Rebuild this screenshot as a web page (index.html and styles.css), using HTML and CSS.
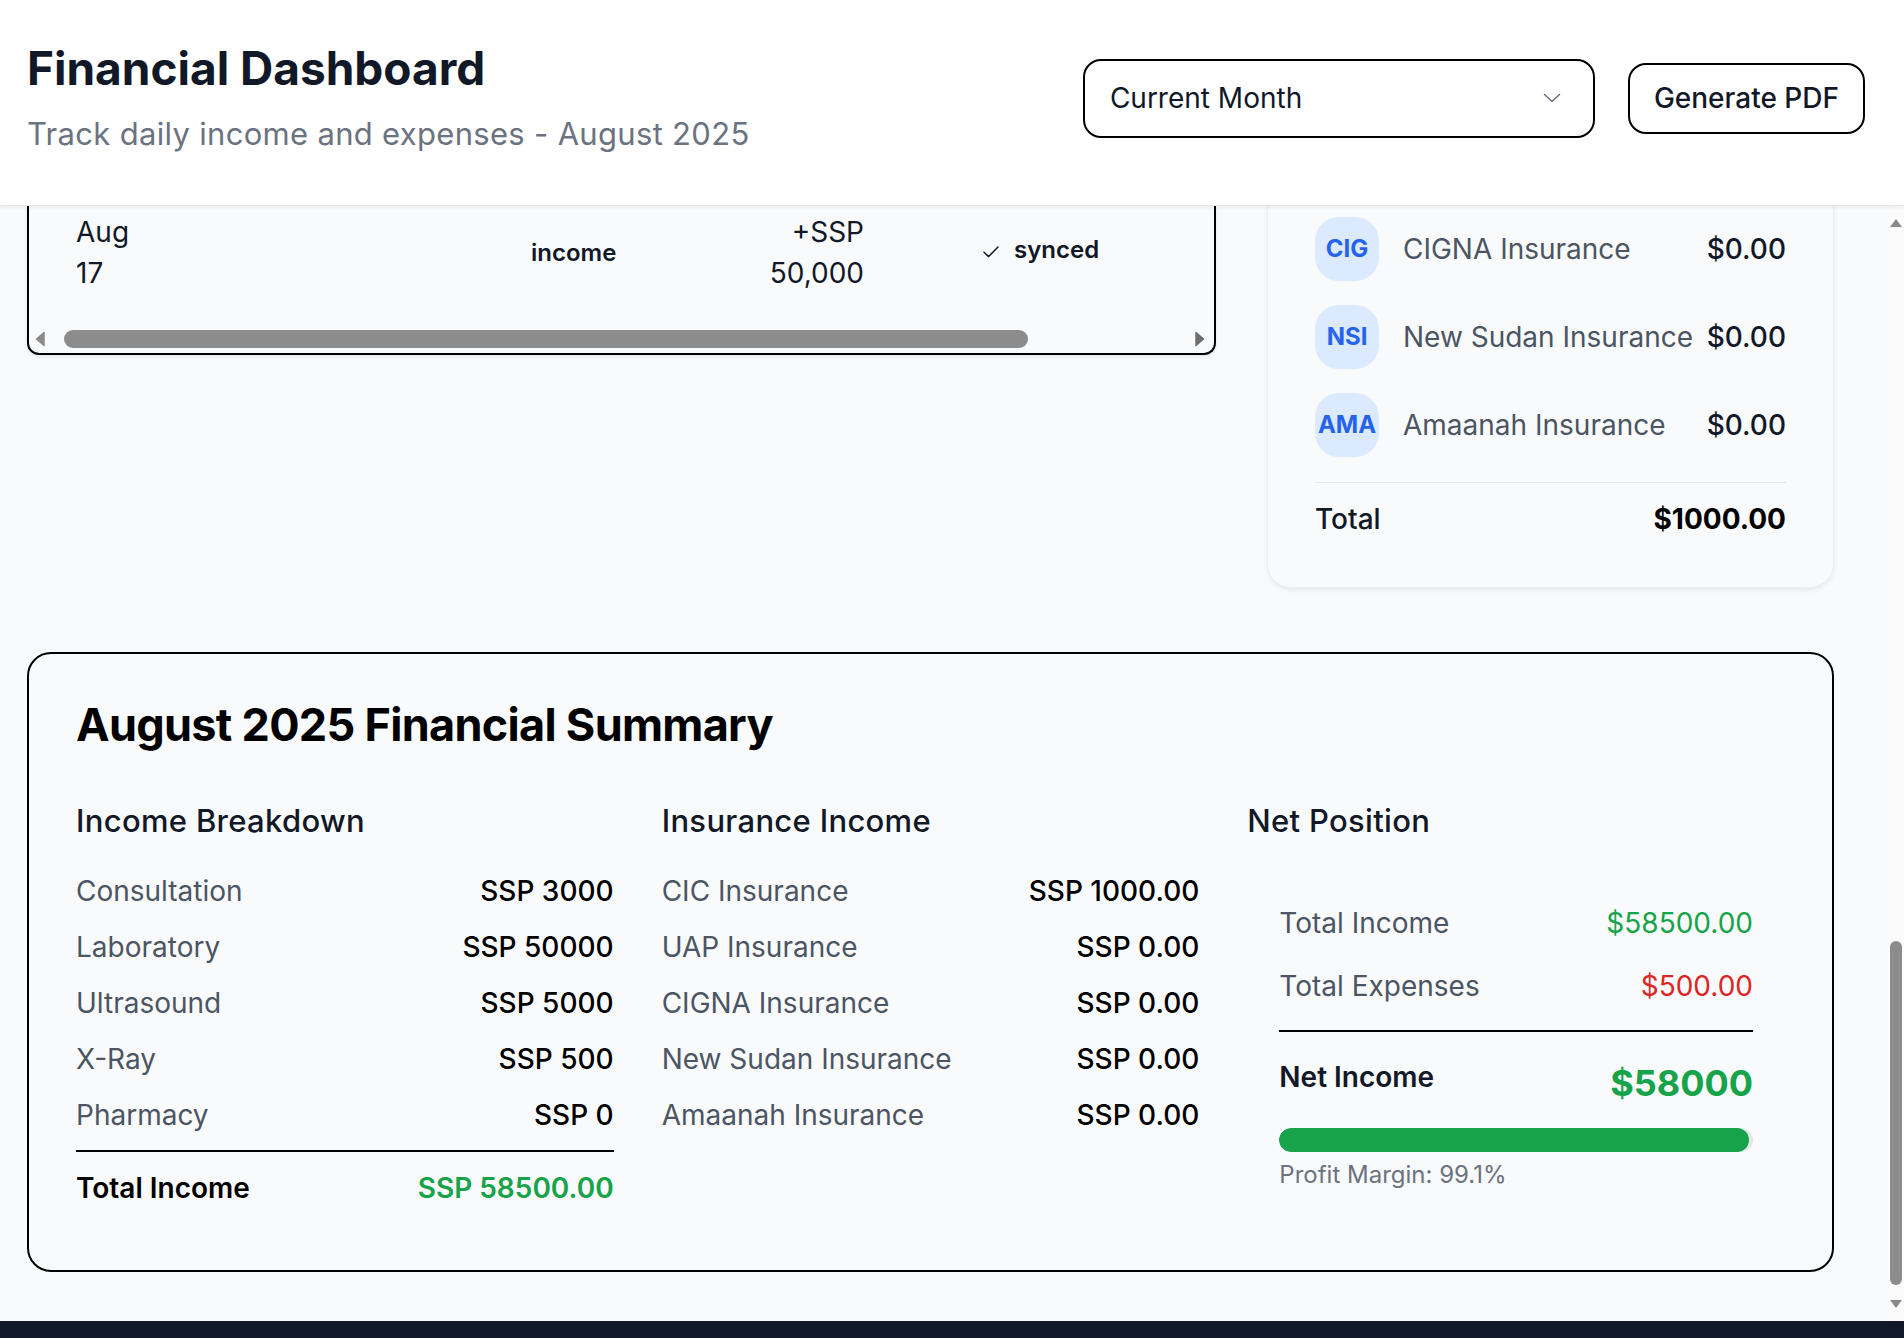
FILE: index.html
```html
<!DOCTYPE html>
<html lang="en">
<head>
<meta charset="utf-8">
<title>Financial Dashboard</title>
<link rel="stylesheet" href="styles.css">
</head>
<body>
<div class="app">
  <header class="topbar">
    <div class="titles">
      <h1 class="page-title">Financial Dashboard</h1>
      <p class="page-sub">Track daily income and expenses - August 2025</p>
    </div>
    <div class="actions">
      <div class="select">
        <span>Current Month</span>
        <svg class="chev" viewBox="0 0 18 10" width="18" height="10"><path d="M1.5 1.5l7.5 7 7.5-7" fill="none" stroke="#6b7280" stroke-width="1.6" stroke-linecap="round" stroke-linejoin="round"/></svg>
      </div>
      <button class="btn">Generate PDF</button>
    </div>
  </header>

  <div class="viewport">
    <main class="content">
      <div class="top-grid">
        <section class="tx-card">
          <div class="tx-row">
            <div class="c-date"><span class="date-text">Aug 17</span></div>
            <div class="c-type">income</div>
            <div class="c-amount">+SSP 50,000</div>
            <div class="c-status">
              <svg class="check" viewBox="0 0 16 12" width="16" height="12"><path d="M1 6.2l4.6 4.4L15 1" fill="none" stroke="#111827" stroke-width="1.5" stroke-linecap="round" stroke-linejoin="round"/></svg>
              <span>synced</span>
            </div>
          </div>
          <div class="hscroll">
            <svg class="harrow" viewBox="0 0 10 16" width="10" height="16"><path d="M9 1.5L1.5 8 9 14.5z" fill="#8a8a8a" stroke="#8a8a8a" stroke-width="1.5" stroke-linejoin="round"/></svg>
            <div class="hthumb"></div>
            <svg class="harrow harrow-r" viewBox="0 0 10 16" width="10" height="16"><path d="M1 1.5L8.5 8 1 14.5z" fill="#6e6e6e" stroke="#6e6e6e" stroke-width="1.5" stroke-linejoin="round"/></svg>
          </div>
        </section>

        <section class="ins-card">
          <div class="ins-list">
            <div class="ins-row">
              <div class="avatar">CIG</div>
              <span class="ins-name">CIGNA Insurance</span>
              <span class="ins-amt">$0.00</span>
            </div>
            <div class="ins-row">
              <div class="avatar">NSI</div>
              <span class="ins-name">New Sudan Insurance</span>
              <span class="ins-amt">$0.00</span>
            </div>
            <div class="ins-row">
              <div class="avatar">AMA</div>
              <span class="ins-name">Amaanah Insurance</span>
              <span class="ins-amt">$0.00</span>
            </div>
          </div>
          <div class="ins-total">
            <span class="ins-total-label">Total</span>
            <span class="ins-total-amt">$1000.00</span>
          </div>
        </section>
      </div>

      <section class="summary">
        <h2 class="summary-title">August 2025 Financial Summary</h2>
        <div class="summary-grid">
          <div class="col">
            <h3 class="col-title">Income Breakdown</h3>
            <div class="rows">
              <div class="row"><span class="lbl">Consultation</span><span class="val">SSP 3000</span></div>
              <div class="row"><span class="lbl">Laboratory</span><span class="val">SSP 50000</span></div>
              <div class="row"><span class="lbl">Ultrasound</span><span class="val">SSP 5000</span></div>
              <div class="row"><span class="lbl">X-Ray</span><span class="val">SSP 500</span></div>
              <div class="row"><span class="lbl">Pharmacy</span><span class="val">SSP 0</span></div>
            </div>
            <div class="row total-row"><span class="total-lbl">Total Income</span><span class="green">SSP 58500.00</span></div>
          </div>

          <div class="col">
            <h3 class="col-title">Insurance Income</h3>
            <div class="rows">
              <div class="row"><span class="lbl">CIC Insurance</span><span class="val">SSP 1000.00</span></div>
              <div class="row"><span class="lbl">UAP Insurance</span><span class="val">SSP 0.00</span></div>
              <div class="row"><span class="lbl">CIGNA Insurance</span><span class="val">SSP 0.00</span></div>
              <div class="row"><span class="lbl">New Sudan Insurance</span><span class="val">SSP 0.00</span></div>
              <div class="row"><span class="lbl">Amaanah Insurance</span><span class="val">SSP 0.00</span></div>
            </div>
          </div>

          <div class="col">
            <h3 class="col-title">Net Position</h3>
            <div class="net-box">
              <div class="net-rows">
                <div class="row"><span class="lbl">Total Income</span><span class="green-reg">$58500.00</span></div>
                <div class="row"><span class="lbl">Total Expenses</span><span class="red-reg">$500.00</span></div>
              </div>
              <div class="net-total">
                <span class="net-lbl">Net Income</span>
                <span class="net-val">$58000</span>
              </div>
              <div class="progress"><div class="progress-fill" style="width: 99.1%"></div></div>
              <p class="margin-note">Profit Margin: 99.1%</p>
            </div>
          </div>
        </div>
      </section>
    </main>

    <div class="vscroll">
      <svg class="varrow" viewBox="0 0 16 10" width="16" height="10"><path d="M2 9L8 1l6 8z" fill="#8a8a8a"/></svg>
      <div class="vthumb"></div>
      <svg class="varrow varrow-d" viewBox="0 0 16 10" width="16" height="10"><path d="M2 1h12L8 9z" fill="#8a8a8a"/></svg>
    </div>
  </div>

  <div class="bottom-bar"></div>
</div>
</body>
</html>
```

FILE: styles.css
```css
* { box-sizing: border-box; }

html, body {
  margin: 0;
  padding: 0;
  background: #f9fafb;
}

body {
  font-family: Inter, "Noto Sans", "Liberation Sans", sans-serif;
  color: #111827;
}

.app {
  width: 1904px;
  height: 1338px;
  display: flex;
  flex-direction: column;
  overflow: hidden;
}

/* ---------- header ---------- */
.topbar {
  position: relative;
  z-index: 2;
  height: 206px;
  flex: none;
  background: #ffffff;
  border-bottom: 1px solid #e5e7eb;
  box-shadow: 0 2px 4px rgba(0, 0, 0, 0.06);
  display: flex;
  align-items: center;
  justify-content: space-between;
  padding: 0 39px 9px 27px;
}

.page-title {
  margin: 0;
  font-size: 46px;
  line-height: 54px;
  font-weight: 700;
  color: #111827;
}

.page-sub {
  margin: 18px 0 0;
  font-size: 31px;
  line-height: 42px;
  letter-spacing: 0.01em;
  color: #6b7280;
}

.actions {
  display: flex;
  align-items: center;
  gap: 33px;
}

.select {
  width: 512px;
  height: 79px;
  border: 2px solid #000;
  border-radius: 18px;
  background: #fff;
  display: flex;
  align-items: center;
  justify-content: space-between;
  padding: 0 32px 0 25px;
  font-size: 28px;
  color: #111827;
}

.chev { display: block; }

.btn {
  height: 71px;
  padding: 0 24px;
  border: 2px solid #000;
  border-radius: 18px;
  background: #fff;
  font-family: inherit;
  font-size: 28px;
  font-weight: 500;
  color: #111827;
}

/* ---------- scrolling area ---------- */
.viewport {
  flex: 1;
  display: flex;
  min-height: 0;
  overflow: hidden;
}

.content {
  flex: 1;
  padding: 0 54px 0 27px;
  background: #f9fafb;
}

.top-grid {
  display: grid;
  grid-template-columns: 1189px 1fr;
  gap: 51px;
  align-items: start;
}

/* transactions card (scrolled, top hidden) */
.tx-card {
  border: 2px solid #000;
  border-top: none;
  border-radius: 0 0 12px 12px;
  background: #f9fafb;
  box-shadow: 0 2px 4px rgba(0, 0, 0, 0.08);
  overflow: hidden;
}

.tx-row {
  display: grid;
  grid-template-columns: 455px 191px 142px auto;
  align-items: center;
  padding: 6px 0 37px 47px;
  font-size: 28px;
  line-height: 40.5px;
}

.date-text {
  display: block;
  width: 62px;
  color: #111827;
}

.c-type {
  font-size: 24px;
  line-height: 36px;
  font-weight: 600;
  color: #111827;
}

.c-amount {
  text-align: right;
  color: #111827;
}

.c-status {
  display: flex;
  align-items: baseline;
  gap: 15px;
  padding-left: 119px;
  margin-top: -6px;
  font-size: 24px;
  line-height: 36px;
  font-weight: 600;
}

.check {
  display: block;
  flex: none;
  margin-bottom: -3px;
}

.hscroll {
  display: flex;
  align-items: center;
  height: 18px;
  margin-bottom: 5px;
  padding: 0 9px 0 6px;
}

.harrow { display: block; flex: none; }

.hthumb {
  width: 964px;
  height: 18px;
  margin-left: 19px;
  border-radius: 9px;
  background: #8c8c8c;
}

.harrow-r { margin-left: auto; }

/* insurance card (scrolled, top hidden) */
.ins-card {
  border: 1px solid #eceef1;
  border-top: none;
  border-radius: 0 0 24px 24px;
  background: #f9fafb;
  box-shadow: 0 2px 5px rgba(0, 0, 0, 0.07);
  padding: 11px 47px 47px;
}

.ins-list {
  display: flex;
  flex-direction: column;
  gap: 24px;
}

.ins-row {
  display: flex;
  align-items: center;
  font-size: 28px;
  line-height: 42px;
}

.avatar {
  width: 64px;
  height: 64px;
  flex: none;
  margin-right: 24px;
  border-radius: 24px;
  background: #dbeafe;
  color: #2563eb;
  font-size: 24px;
  font-weight: 700;
  display: flex;
  align-items: center;
  justify-content: center;
}

.ins-name {
  color: #4b5563;
  white-space: nowrap;
}

.ins-amt {
  margin-left: auto;
  padding-left: 12px;
  color: #111827;
  font-weight: 500;
  white-space: nowrap;
}

.ins-total {
  margin-top: 25px;
  border-top: 1px solid #e5e7eb;
  padding-top: 15px;
  display: flex;
  justify-content: space-between;
  font-size: 28px;
  line-height: 42px;
}

.ins-total-label { font-weight: 500; color: #111827; }
.ins-total-amt { font-weight: 700; color: #000; }

/* ---------- summary ---------- */
.summary {
  margin-top: 64px;
  border: 2px solid #000;
  border-radius: 24px;
  padding: 44px 47px 61px;
}

.summary-title {
  margin: 0 0 48px;
  font-size: 45px;
  line-height: 54px;
  font-weight: 700;
  letter-spacing: -0.7px;
  color: #000;
}

.summary-grid {
  display: grid;
  grid-template-columns: repeat(3, 1fr);
  gap: 48px;
}

.col-title {
  margin: 0 0 28px;
  font-size: 31px;
  line-height: 42px;
  font-weight: 500;
  letter-spacing: 0.01em;
  color: #111827;
}

.rows {
  display: flex;
  flex-direction: column;
  gap: 14px;
}

.row {
  display: flex;
  justify-content: space-between;
  font-size: 28px;
  line-height: 42px;
}

.lbl { color: #4b5563; }
.val { color: #000; font-weight: 500; }

.total-row {
  margin-top: 14px;
  border-top: 2px solid #000;
  padding-top: 15px;
  font-weight: 600;
}

.total-lbl { color: #000; }
.green { color: #16a34a; }
.green-reg { color: #16a34a; }
.red-reg { color: #dc2626; }

.net-box {
  padding: 32px 32px 0;
}

.net-rows {
  display: flex;
  flex-direction: column;
  gap: 21px;
}

.net-total {
  margin-top: 23px;
  border-top: 2px solid #000;
  padding-top: 24px;
  display: flex;
  justify-content: space-between;
  align-items: flex-start;
}

.net-lbl {
  font-size: 28px;
  line-height: 42px;
  font-weight: 600;
  color: #111827;
}

.net-val {
  font-size: 36px;
  line-height: 54px;
  font-weight: 700;
  color: #16a34a;
}

.progress {
  margin-top: 18px;
  height: 24px;
  border-radius: 12px;
  background: #e5e7eb;
  overflow: hidden;
}

.progress-fill {
  height: 100%;
  border-radius: 12px;
  background: #16a34a;
}

.margin-note {
  margin: 5px 0 0;
  font-size: 24px;
  line-height: 36px;
  color: #6b7280;
}

/* ---------- fake page scrollbar ---------- */
.vscroll {
  width: 16px;
  flex: none;
  background: #fbfbfb;
  display: flex;
  flex-direction: column;
  align-items: center;
}

.varrow { display: block; margin-top: 12px; }

.vthumb {
  width: 12px;
  height: 344px;
  margin-top: 713px;
  border-radius: 6px;
  background: #8c8c8c;
}

.varrow-d { margin-top: 14px; }

.bottom-bar {
  height: 17px;
  flex: none;
  background: #111827;
}
```
